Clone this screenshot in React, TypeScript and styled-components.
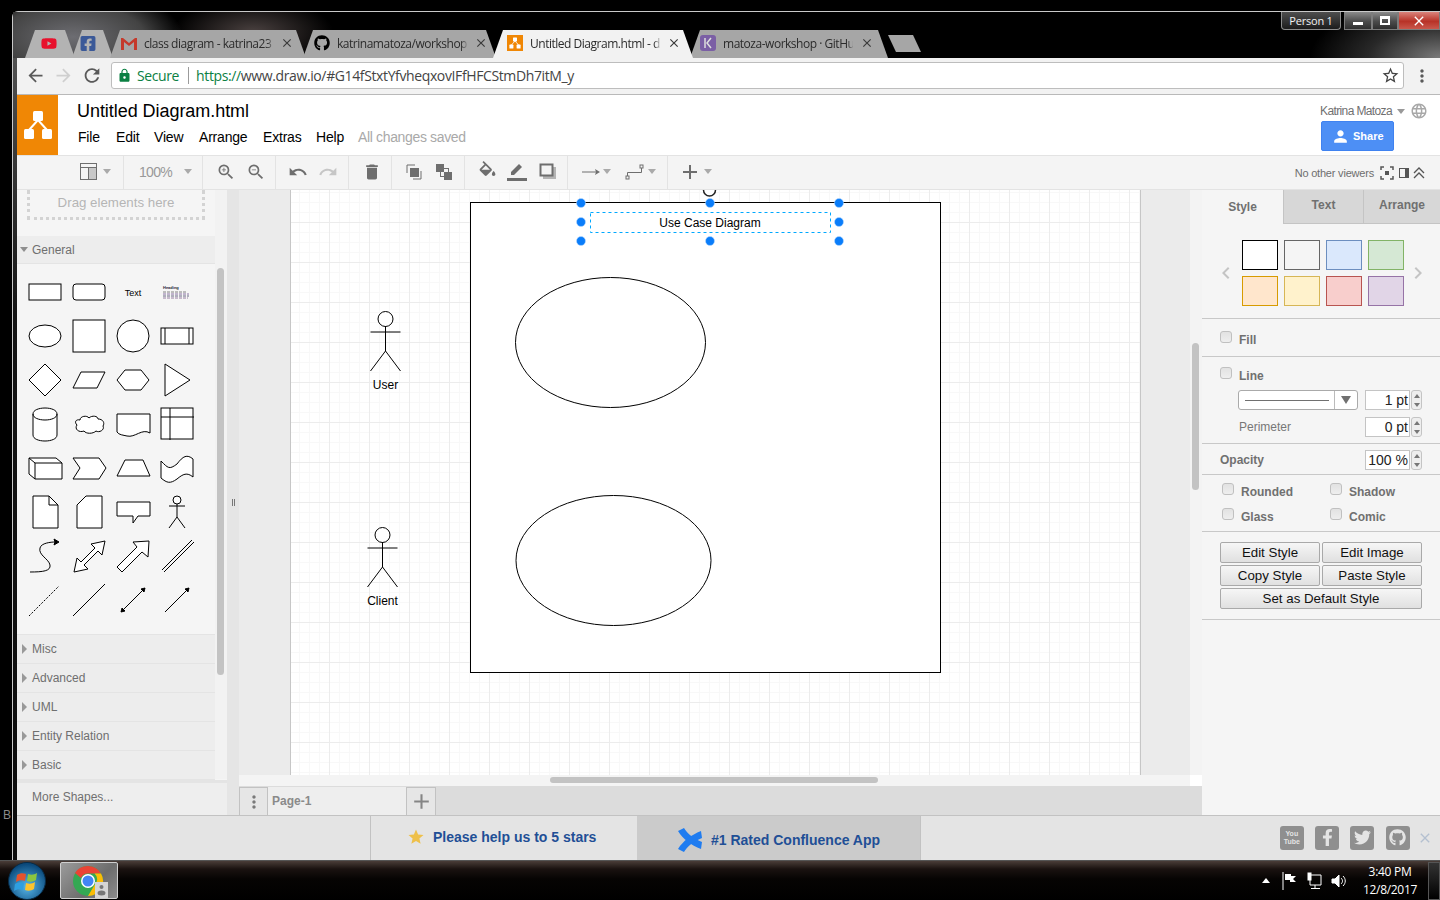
import React from 'react';
import styled, { createGlobalStyle } from 'styled-components';
import {
    MdArrowBack,
    MdArrowForward,
    MdRefresh,
    MdLock,
    MdStarBorder,
    MdMoreVert,
    MdZoomIn,
    MdZoomOut,
    MdUndo,
    MdRedo,
    MdDelete,
    MdAdd,
    MdPerson,
    MdLanguage,
    MdStar,
    MdChevronLeft,
    MdChevronRight,
    MdClose,
} from 'react-icons/md';
import { FaYoutube, FaFacebookF, FaFacebookSquare, FaGithub, FaTwitter } from 'react-icons/fa';

const uiFont = '"Liberation Sans", Arial, sans-serif';
const chromeFont = '"Open Sans", "Noto Sans", sans-serif';

const GlobalStyle = createGlobalStyle`
    html, body {
        margin: 0;
        padding: 0;
        background: #000;
        font-family: ${uiFont};
        overflow: hidden;
    }
    * {
        box-sizing: border-box;
    }
`;

const Desktop = styled.div`
    position: relative;
    width: 1440px;
    height: 900px;
    padding-top: 11px;
    display: flex;
    flex-direction: column;
    background: #000;
    overflow: hidden;
`;

const DesktopLetter = styled.span<{ $top: number }>`
    position: absolute;
    left: 3px;
    top: ${p => p.$top}px;
    font-size: 12px;
    color: #8a8a8a;
`;

const BrowserWindow = styled.div`
    margin-left: 12px;
    height: 849px;
    display: flex;
    flex-direction: column;
    border-top: 1px solid #c9c9c9;
    border-left: 1px solid #c9c9c9;
    border-top-left-radius: 6px;
    padding-left: 4px;
    background: linear-gradient(180deg, #5c5c5c 0, #303030 180px, #141414 300px, #0b0b0b 100%);
`;

const Gap = styled.span<{ $left: number }>`
    margin-left: ${p => p.$left}px;
    display: flex;
    align-items: center;
    flex: none;
`;

/* chrome tabs */
const TabStrip = styled.div`
    height: 46px;
    margin-left: -4px;
    display: flex;
    background:
        radial-gradient(ellipse 110px 50px at 60px 25px, #6d6d72 0, rgba(90, 90, 90, 0.75) 65%, transparent 100%),
        radial-gradient(ellipse 80px 34px at 240px 20px, #4a4140 0, transparent 100%),
        radial-gradient(ellipse 130px 60px at 1427px 46px, #7a7a7a 0, rgba(80, 80, 80, 0.5) 55%, transparent 100%),
        #000;
`;

const Tabs = styled.div`
    align-self: flex-end;
    display: flex;
    height: 28px;
    margin-left: 12px;
`;

const Tab = styled.div<{ $width: number; $pad?: number; $padRight?: number; $active?: boolean; $faint?: boolean }>`
    width: ${p => p.$width}px;
    margin-right: -3px;
    padding: 0 ${p => p.$padRight || 8}px 2px ${p => p.$pad || 11}px;
    display: flex;
    align-items: center;
    gap: 7px;
    clip-path: polygon(0 100%, 10px 0, calc(100% - 10px) 0, 100% 100%);
    background: ${p => (p.$active ? '#f2f2f2' : p.$faint ? '#b3b3b3' : '#a6a6a6')};
    position: relative;
    z-index: ${p => (p.$active ? 2 : 1)};
`;

const TabIcon = styled.span<{ $color?: string }>`
    width: 16px;
    height: 16px;
    flex: none;
    display: flex;
    align-items: center;
    justify-content: center;
    color: ${p => p.$color || '#000'};
`;

const TabLogo = styled.span`
    width: 16px;
    height: 16px;
    display: flex;
    align-items: center;
    justify-content: center;
    background: #f08705;
`;

const TabTitle = styled.span`
    flex: 1;
    min-width: 0;
    white-space: nowrap;
    font-family: ${chromeFont};
    font-size: 12px;
    letter-spacing: -0.48px;
    color: #2b2b2b;
    -webkit-mask-image: linear-gradient(90deg, #000 calc(100% - 6px), rgba(0, 0, 0, 0.2) 100%);
    mask-image: linear-gradient(90deg, #000 calc(100% - 6px), rgba(0, 0, 0, 0.2) 100%);
`;

const TabClose = styled(MdClose)`
    flex: none;
    width: 14px;
    height: 14px;
    color: #3a3a3a;
`;

const NewTab = styled.div`
    align-self: flex-end;
    width: 33px;
    height: 17px;
    margin: 0 0 6px 3px;
    clip-path: polygon(0 0, 25px 0, 100% 100%, 8px 100%);
    background: #a6a6a6;
`;

const WindowControls = styled.div`
    margin-left: auto;
    display: flex;
    align-self: flex-start;
    height: 18px;
`;

const PersonButton = styled.div`
    width: 60px;
    margin-right: 3px;
    border: 1px solid #8d8d8d;
    border-top: none;
    border-radius: 0 0 4px 4px;
    background: linear-gradient(180deg, #4e4e4e, #1c1c1c);
    color: #f2f2f2;
    font-family: ${chromeFont};
    font-size: 11px;
    letter-spacing: -0.2px;
    text-align: center;
    line-height: 17px;
`;

const ControlButton = styled.div<{ $width: number; $close?: boolean }>`
    width: ${p => p.$width}px;
    border: 1px solid #7d7d7d;
    border-top: none;
    display: flex;
    align-items: center;
    justify-content: center;
    color: #fff;
    background: ${p =>
        p.$close
            ? 'linear-gradient(180deg, #d9837b 0, #b83227 55%, #c9584c 100%)'
            : 'linear-gradient(180deg, #8a8a8a 0, #4c4c4c 55%, #2f2f2f 100%)'};
`;

const MinGlyph = styled.span`
    width: 10px;
    height: 3px;
    margin-top: 6px;
    background: #fff;
`;

const MaxGlyph = styled.span`
    width: 10px;
    height: 9px;
    border: 2px solid #fff;
    border-top-width: 3px;
`;

/* omnibar */
const Omnibar = styled.div`
    height: 37px;
    display: flex;
    align-items: center;
    background: #f2f2f2;
    border-bottom: 1px solid #b9b9b9;
    padding-left: 8px;
    padding-bottom: 1px;
`;

const NavIcon = styled.span<{ $width: number; $faint?: boolean }>`
    width: ${p => p.$width}px;
    display: flex;
    justify-content: center;
    color: ${p => (p.$faint ? '#cfcfcf' : '#5a5a5a')};
    font-size: 21px;
`;

const UrlBox = styled.div`
    width: 1295px;
    height: 27px;
    margin-left: 8px;
    display: flex;
    align-items: center;
    background: #fff;
    border: 1px solid #bdbdbd;
    border-radius: 3px;
    padding-left: 5px;
    font-family: ${chromeFont};
    font-size: 14px;
    letter-spacing: -0.38px;
`;

const SecureLabel = styled.span`
    color: #0b8043;
    margin-left: 5px;
`;

const UrlDivider = styled.span`
    width: 1px;
    height: 17px;
    background: #9b9b9b;
    margin: 0 7px 0 9px;
`;

const UrlScheme = styled.span`
    color: #0b8043;
`;

const UrlRest = styled.span`
    color: #444;
`;

const BookmarkStar = styled(MdStarBorder)`
    margin-left: auto;
    margin-right: 3px;
    color: #444;
    font-size: 19px;
`;

/* draw.io header */
const AppHeader = styled.header`
    height: 60px;
    display: flex;
    background: #fff;
`;

const LogoTile = styled.div`
    width: 41px;
    background: #f08705;
    display: flex;
    align-items: center;
    justify-content: center;
`;

const TitleColumn = styled.div`
    margin-left: 19px;
    display: flex;
    flex-direction: column;
`;

const DiagramName = styled.div`
    margin-top: 6px;
    font-size: 18px;
    line-height: 21px;
    letter-spacing: -0.05px;
    color: #000;
`;

const MenuBar = styled.nav`
    display: flex;
    align-items: center;
    margin-top: 7px;
    margin-left: 1px;
    font-size: 14px;
    letter-spacing: -0.2px;
    color: #000;
`;

const MenuItem = styled.span<{ $width: number }>`
    width: ${p => p.$width}px;
`;

const SaveStatus = styled.span`
    color: #a9a9a9;
    letter-spacing: -0.35px;
`;

const AccountColumn = styled.div`
    margin-left: auto;
    width: 119px;
    padding-top: 7px;
    display: flex;
    flex-direction: column;
`;

const AccountRow = styled.div`
    margin-left: -1px;
    display: flex;
    align-items: center;
    font-size: 12px;
    letter-spacing: -0.62px;
    color: #707070;
    height: 18px;
`;

const Caret = styled.span<{ $dir?: 'down' | 'right' | 'up'; $color?: string; $left?: number }>`
    display: inline-block;
    width: 0;
    height: 0;
    flex: none;
    margin-left: ${p => p.$left || 0}px;
    ${p =>
        p.$dir === 'right'
            ? `border-top: 5px solid transparent; border-bottom: 5px solid transparent; border-left: 5px solid ${p.$color || '#999'};`
            : p.$dir === 'up'
              ? `border-left: 4px solid transparent; border-right: 4px solid transparent; border-bottom: 5px solid ${p.$color || '#aaa'};`
              : `border-left: 4px solid transparent; border-right: 4px solid transparent; border-top: 5px solid ${p.$color || '#aaa'};`}
`;

const ShareButton = styled.button`
    width: 73px;
    height: 30px;
    margin-top: 1px;
    display: flex;
    align-items: center;
    gap: 3px;
    padding: 0 0 0 9px;
    border: 1px solid #3f82f0;
    border-radius: 2px;
    background: #4d8ff5;
    color: #fff;
    font-family: ${uiFont};
    font-size: 11px;
    font-weight: bold;
`;

/* toolbar */
const Toolbar = styled.div`
    height: 35px;
    display: flex;
    background: #f4f4f4;
    border-top: 1px solid #e3e3e3;
    border-bottom: 1px solid #e3e3e3;
`;

const ToolGroup = styled.div<{ $width: number; $pad?: number; $last?: boolean }>`
    width: ${p => p.$width}px;
    padding: 0 0 2px ${p => p.$pad || 0}px;
    display: flex;
    align-items: center;
    border-right: ${p => (p.$last ? 'none' : '1px solid #e3e3e3')};
    color: #6e6e6e;
    font-size: 20px;
`;

const ToolSlot = styled.span<{ $width: number }>`
    width: ${p => p.$width}px;
    display: flex;
    justify-content: center;
    align-items: center;
`;

const ZoomValue = styled.span`
    width: 41px;
    font-size: 14px;
    letter-spacing: -0.7px;
    color: #999;
    text-align: center;
`;

const ViewerInfo = styled.div`
    margin-left: auto;
    padding-right: 15px;
    display: flex;
    align-items: center;
    color: #6e6e6e;
    font-size: 11px;
    letter-spacing: -0.2px;
`;

/* main area */
const Main = styled.div`
    height: 625px;
    display: flex;
    background: #f5f5f5;
`;

const Sidebar = styled.aside`
    position: relative;
    width: 210px;
    flex: none;
    display: flex;
    flex-direction: column;
    background: #f5f5f5;
    overflow: hidden;
`;

const SidebarBody = styled.div`
    flex: 1;
    width: 198px;
`;

const DragArea = styled.div`
    margin-left: 10px;
    width: 178px;
    height: 30px;
    border: 3px dotted #d3d3d3;
    border-top: none;
    font-size: 13.3px;
    color: #b5b5b5;
    text-align: center;
    padding-top: 4px;
    line-height: 18px;
    white-space: nowrap;
`;

const SectionRow = styled.div`
    height: 29px;
    display: flex;
    align-items: center;
    gap: 5px;
    padding-left: 5px;
    background: #ededed;
    border-bottom: 1px solid #e4e4e4;
    font-size: 12px;
    color: #6f6f6f;
`;

const GeneralRow = styled(SectionRow)`
    margin-top: 16px;
    height: 28px;
    gap: 4px;
    padding-left: 3px;
`;

const ShapeGrid = styled.div`
    padding: 6px 0 12px 6px;
    display: grid;
    grid-template-columns: repeat(4, 44px);
    grid-auto-rows: 44px;
    border-bottom: 1px solid #e4e4e4;
`;

const ShapeSvg = styled.svg`
    display: block;
    width: 44px;
    height: 44px;
    fill: #fff;
    stroke: #000;
    stroke-width: 1;
`;

const ScrollTrack = styled.div`
    position: absolute;
    left: 198px;
    top: 0;
    bottom: 36px;
    width: 12px;
    background: #f2f2f2;
`;

const ScrollThumb = styled.div<{ $top: number; $height: number }>`
    position: absolute;
    left: 2px;
    top: ${p => p.$top}px;
    width: 7px;
    height: ${p => p.$height}px;
    border-radius: 4px;
    background: #c3c3c3;
`;

const MoreShapes = styled.div`
    height: 36px;
    flex: none;
    border-top: 3px solid #e4e4e4;
    background: #eeeeee;
    padding-left: 15px;
    font-size: 12px;
    line-height: 28px;
    color: #707070;
`;

const Splitter = styled.div`
    width: 12px;
    flex: none;
    background: #e5e5e5;
    display: flex;
    align-items: center;
    justify-content: center;
    gap: 1px;
`;

const SplitGrip = styled.span`
    width: 1px;
    height: 7px;
    background: #777;
`;

const CanvasColumn = styled.div`
    flex: 1;
    min-width: 0;
    display: flex;
    flex-direction: column;
    background: #fff;
`;

const Viewport = styled.div`
    height: 585px;
    display: flex;
    background: #ebebeb;
`;

const CanvasGutter = styled.div<{ $width: number }>`
    width: ${p => p.$width}px;
    flex: none;
`;

const PageSheet = styled.div`
    width: 851px;
    flex: none;
    position: relative;
    overflow: hidden;
    border-left: 1px solid #c6c6c6;
    border-right: 1px solid #c6c6c6;
    background-color: #fff;
    background-image:
        linear-gradient(#ececec 1px, transparent 1px),
        linear-gradient(90deg, #ececec 1px, transparent 1px),
        linear-gradient(#f8f8f8 1px, transparent 1px),
        linear-gradient(90deg, #f8f8f8 1px, transparent 1px);
    background-size: 40px 40px, 40px 40px, 10px 10px, 10px 10px;
    background-position: 0 32px, 38px 0, 0 2px, 8px 0;
`;

const DiagramSvg = styled.svg`
    position: absolute;
    left: 0;
    top: 0;
`;

const VScrollTrack = styled.div`
    position: relative;
    width: 12px;
    flex: none;
    margin-left: auto;
    background: #f3f3f3;
`;

const HScrollTrack = styled.div`
    position: relative;
    height: 11px;
    background: #f4f4f4;
    margin-right: 12px;
`;

const HThumb = styled.div`
    position: absolute;
    left: 311px;
    top: 2px;
    width: 328px;
    height: 6px;
    border-radius: 3px;
    background: #c3c3c3;
`;

const PageTabs = styled.div`
    height: 29px;
    display: flex;
    background: #dcdcdc;
    border-top: 1px solid #dcdcdc;
`;

const PageMenu = styled.div`
    width: 29px;
    display: flex;
    align-items: center;
    justify-content: center;
    background: #e6e6e6;
    border: 1px solid #c2c2c2;
    border-bottom: none;
    color: #7a7a7a;
    font-size: 20px;
`;

const PageTab = styled.div`
    width: 138px;
    background: #eeeeee;
    padding-left: 4px;
    font-size: 12px;
    line-height: 28px;
    font-weight: bold;
    color: #8a8a8a;
`;

const PageAdd = styled(PageMenu)`
    width: 30px;
    font-size: 25px;
    color: #858585;
`;

/* format panel */
const FormatPanel = styled.aside`
    width: 238px;
    flex: none;
    background: #f5f5f5;
`;

const PanelTabs = styled.div`
    height: 34px;
    display: flex;
`;

const PanelTab = styled.div<{ $width: number; $active?: boolean }>`
    width: ${p => p.$width}px;
    text-align: center;
    font-size: 12px;
    font-weight: bold;
    color: #707070;
    line-height: ${p => (p.$active ? 34 : 30)}px;
    background: ${p => (p.$active ? '#f5f5f5' : '#d7d7d7')};
    border-left: ${p => (p.$active ? 'none' : '1px solid #c4c4c4')};
    border-bottom: ${p => (p.$active ? 'none' : '1px solid #c4c4c4')};
`;

const PanelSection = styled.section<{ $height: number }>`
    height: ${p => p.$height}px;
    border-bottom: 1px solid #c8c8c8;
`;

const SwatchLayout = styled.div`
    display: flex;
    align-items: center;
    padding: 16px 0 0 12px;
    color: #c4c4c4;
    font-size: 24px;
    gap: 4px;
`;

const SwatchGrid = styled.div`
    display: grid;
    grid-template-columns: repeat(4, 36px);
    grid-auto-rows: 30px;
    gap: 6px;
`;

const NextSwatches = styled(MdChevronRight)`
    margin-left: -2px;
`;

const Swatch = styled.div<{ $fill: string; $line: string }>`
    background: ${p => p.$fill};
    border: 1px solid ${p => p.$line};
`;

const CheckRow = styled.label`
    display: flex;
    align-items: center;
    gap: 7px;
    font-size: 12px;
    font-weight: bold;
    color: #707070;
`;

const FillRow = styled(CheckRow)`
    padding: 14px 0 0 18px;
`;

const LineHead = styled(CheckRow)`
    padding: 8px 0 0 18px;
    height: 30px;
`;

const CheckBox = styled.span`
    width: 12px;
    height: 12px;
    flex: none;
    border: 1px solid #c0c0c0;
    border-radius: 3px;
    background: linear-gradient(180deg, #e2e2e2, #eeeeee);
    position: relative;
    top: -3px;
`;

const FieldRow = styled.div<{ $top: number }>`
    height: 20px;
    margin-top: ${p => p.$top}px;
    padding: 0 18px 0 36px;
    display: flex;
    align-items: center;
`;

const LineSelect = styled.div`
    width: 120px;
    height: 20px;
    display: flex;
    align-items: center;
    background: #fff;
    border: 1px solid #aaa;
    border-radius: 3px;
    padding-left: 6px;
`;

const SelectLine = styled.span`
    width: 85px;
    height: 1px;
    background: #707070;
`;

const SelectArrow = styled.span`
    margin-left: 5px;
    width: 23px;
    height: 18px;
    border-left: 1px solid #bbb;
    display: flex;
    align-items: center;
    justify-content: center;
`;

const SelectCaret = styled(Caret)`
    border-left-width: 5px;
    border-right-width: 5px;
    border-top-width: 8px;
`;

const SpinInput = styled.div`
    width: 45px;
    height: 20px;
    flex: none;
    margin-left: auto;
    border: 1px solid #c4c4c4;
    background: #fff;
    color: #222;
    font-size: 14px;
    font-weight: normal;
    line-height: 19px;
    text-align: right;
    padding-right: 1px;
`;

const Stepper = styled.div`
    width: 11px;
    height: 20px;
    flex: none;
    margin-left: 1px;
    border: 1px solid #c4c4c4;
    border-radius: 3px;
    display: flex;
    flex-direction: column;
    align-items: center;
    justify-content: space-around;
    background: #eee;
`;

const StepUp = styled.span`
    width: 0;
    height: 0;
    border-left: 3px solid transparent;
    border-right: 3px solid transparent;
    border-bottom: 4px solid #777;
`;

const StepDown = styled.span`
    width: 0;
    height: 0;
    border-left: 3px solid transparent;
    border-right: 3px solid transparent;
    border-top: 4px solid #777;
`;

const FieldName = styled.span`
    margin-left: 1px;
    font-size: 12px;
    color: #777;
`;

const OpacityRow = styled.div`
    height: 26px;
    padding: 6px 18px 0;
    display: flex;
    align-items: center;
    font-size: 12px;
    font-weight: bold;
    color: #707070;
`;

const OptionGrid = styled.div`
    padding: 4px 0 0 20px;
    display: grid;
    grid-template-columns: repeat(2, 108px);
    grid-auto-rows: 25px;
`;

const ActionGrid = styled.div`
    padding: 10px 0 0 18px;
    display: grid;
    grid-template-columns: repeat(2, 100px);
    grid-auto-rows: 21px;
    gap: 2px;
`;

const ActionButton = styled.button<{ $wide?: boolean }>`
    ${p => (p.$wide ? 'grid-column: span 2;' : '')}
    padding: 0;
    border: 1px solid #a9a9a9;
    border-radius: 2px;
    background: linear-gradient(180deg, #f6f6f6, #e0e0e0);
    font-family: ${uiFont};
    font-size: 13.3px;
    color: #111;
`;

/* footer */
const Footer = styled.footer`
    height: 45px;
    display: flex;
    background: #e4e4e4;
    border-top: 1px solid #c2c2c2;
`;

const FooterLink = styled.div<{ $width: number; $left: number; $highlight?: boolean; $offset: number }>`
    width: ${p => p.$width}px;
    margin-left: ${p => p.$left}px;
    padding: ${p => p.$offset}px 0 2px ${p => (p.$highlight ? 40 : 36)}px;
    display: flex;
    align-items: center;
    align-self: stretch;
    gap: 8px;
    background: ${p => (p.$highlight ? '#cbcbcb' : 'transparent')};
    border-left: ${p => (p.$highlight ? 'none' : '1px solid #c2c2c2')};
    border-right: ${p => (p.$highlight ? '1px solid #c2c2c2' : 'none')};
    font-size: 14px;
    font-weight: bold;
    color: #1f4f96;
`;

const SocialRow = styled.div`
    margin-left: auto;
    padding: 0 7px 1px 0;
    display: flex;
    align-items: center;
    gap: 11.3px;
`;

const SocialTile = styled.div`
    width: 24px;
    height: 24px;
    border-radius: 3px;
    background: #8f8f8f;
    color: #e4e4e4;
    display: flex;
    align-items: center;
    justify-content: center;
    font-size: 17px;
`;

const YouTubeText = styled.div`
    font-size: 7px;
    line-height: 8px;
    text-align: center;
    font-weight: bold;
`;

const FooterClose = styled(MdClose)`
    margin-left: -4px;
    color: #b4c0d0;
    font-size: 16px;
`;

/* windows taskbar */
const Taskbar = styled.div`
    height: 40px;
    display: flex;
    align-items: center;
    background: linear-gradient(180deg, #4a3d38 0, #1a1210 8px, #060403 18px, #000 100%);
    border-top: 1px solid #555;
`;

const StartOrb = styled.svg`
    width: 40px;
    height: 40px;
    margin-left: 7px;
`;

const TaskButton = styled.div`
    width: 58px;
    height: 37px;
    margin-left: 13px;
    padding-left: 4px;
    display: flex;
    align-items: center;
    justify-content: center;
    border: 1px solid #cfcfcf;
    border-radius: 2px;
    background: linear-gradient(135deg, #9b9b9b, #6d6d6d 60%, #8c8c8c);
`;

const Tray = styled.div`
    margin-left: auto;
    display: flex;
    align-items: center;
    color: #fff;
`;

const Clock = styled.div`
    width: 76px;
    margin: 1px 0 0 5px;
    text-align: center;
    font-family: ${chromeFont};
    font-size: 12px;
    letter-spacing: -0.3px;
    line-height: 18px;
    color: #fff;
`;

const ShowDesktop = styled.div`
    width: 12px;
    height: 38px;
    border: 1px solid #555;
    background: linear-gradient(180deg, #333, #000);
`;

const GmailGlyph = () => (
    <svg width="16" height="13" viewBox="0 0 16 13">
        <path d="M0 13V1h2l6 5 6-5h2v12h-3V5L8 9 3 5v8z" fill="#c5392b" />
    </svg>
);

const DrawioGlyph = ({ size }: { size: number }) => (
    <svg width={size} height={size} viewBox="0 0 30 30" fill="#fff">
        <rect x="10" y="1" width="10" height="10" rx="1.5" />
        <rect x="1" y="19" width="10" height="10" rx="1.5" />
        <rect x="19" y="19" width="10" height="10" rx="1.5" />
        <path d="M15 10L6 20M15 10l9 10" stroke="#fff" strokeWidth="2" fill="none" />
    </svg>
);

const ChromeLogo = () => (
    <svg width="36" height="36" viewBox="0 0 36 36">
        <circle cx="15" cy="18" r="15" fill="#34a853" />
        <path d="M15 3a15 15 0 0 1 13 7.500H15a7.500 7.500 0 0 0-7 4.500L2 10A15 15 0 0 1 15 3z" fill="#ea4335" />
        <path d="M28 10.500a15 15 0 0 1-13 22.500l6.500-11a7.500 7.500 0 0 0 0-11.500z" fill="#fbbc05" />
        <circle cx="15" cy="18" r="7" fill="#fff" />
        <circle cx="15" cy="18" r="5.500" fill="#4285f4" />
        <rect x="22" y="19" width="13" height="16" fill="#d5d5d5" />
        <circle cx="28.500" cy="24" r="2" fill="#777" />
        <ellipse cx="28.500" cy="30" rx="4" ry="2.500" fill="#777" />
    </svg>
);

const ConfluenceGlyph = () => (
    <svg width="26" height="26" viewBox="0 0 26 26" fill="#1f7cf0">
        <path d="M1 4l6-3c3 5 7 9 18 14l-1 7C14 18 6 12 1 4z" />
        <path d="M1 22l6 3c3-5 7-9 18-14l-1-7C14 8 6 14 1 22z" />
    </svg>
);

const ToFrontIcon = () => (
    <svg width="18" height="18" viewBox="0 0 18 18">
        <path d="M2 10V2h8M16 8v8H8" fill="none" stroke="#6e6e6e" />
        <rect x="5" y="5" width="9" height="9" fill="#6e6e6e" />
    </svg>
);

const ToBackIcon = () => (
    <svg width="18" height="18" viewBox="0 0 18 18">
        <rect x="5.500" y="5.500" width="8" height="8" fill="none" stroke="#6e6e6e" />
        <rect x="1" y="1" width="8" height="8" fill="#6e6e6e" />
        <rect x="9" y="9" width="8" height="8" fill="#6e6e6e" />
    </svg>
);

const BucketIcon = () => (
    <svg width="21" height="21" viewBox="0 0 24 24" fill="#6e6e6e">
        <path d="M16.560 8.940L7.620 0 6.210 1.410l2.380 2.380-5.150 5.150c-.59.59-.59 1.540 0 2.120l5.500 5.500c.29.29.68.44 1.060.44s.77-.15 1.060-.44l5.500-5.500c.59-.58.59-1.530 0-2.120zM5.210 10L10 5.210 14.790 10H5.210zM19 11.500s-2 2.170-2 3.500c0 1.100.9 2 2 2s2-.9 2-2c0-1.330-2-3.500-2-3.500z" />
    </svg>
);

const shapeRows: React.ReactNode[] = [
    <rect key="r1" x="6" y="14" width="32" height="16" />,
    <rect key="r2" x="6" y="14" width="32" height="16" rx="3" />,
    <text key="r3" x="22" y="26" fontSize="9" fontFamily={uiFont} textAnchor="middle" stroke="none" fill="#000">
        Text
    </text>,
    <g key="r4" fill="none" strokeWidth="0.800">
        <text x="8" y="19" fontSize="4" fontFamily={uiFont} fontWeight="bold" stroke="none" fill="#223">
            Heading
        </text>
        <path d="M8 22h24" stroke="#666" strokeDasharray="3 1" />
        <path d="M8 24h26" stroke="#705090" strokeDasharray="3 1" />
        <path d="M8 26h26" stroke="#446" strokeDasharray="3 1" />
        <path d="M8 28h25" stroke="#806090" strokeDasharray="3 1" />
    </g>,
    <ellipse key="e" cx="22" cy="22" rx="16" ry="11" />,
    <rect key="s" x="6" y="6" width="32" height="32" />,
    <circle key="c" cx="22" cy="22" r="16" />,
    <g key="p">
        <rect x="6" y="14" width="32" height="16" />
        <path d="M10 14v16M34 14v16" />
    </g>,
    <polygon key="d" points="22,6 38,22 22,38 6,22" />,
    <polygon key="pl" points="6,30 14,14 38,14 30,30" />,
    <polygon key="h" points="6,22 14,12 30,12 38,22 30,32 14,32" />,
    <polygon key="t" points="10,6 35,22 10,38" />,
    <g key="cy">
        <path d="M10 12c0-8 24-8 24 0v21c0 8-24 8-24 0z" />
        <path d="M10 12c0 8 24 8 24 0" fill="none" />
    </g>,
    <path
        key="cl"
        d="M13 18c0-4 7-5 9-2 3-3 9-2 9 1 5 0 7 4 5 7 2 4-4 7-7 5-3 3-10 3-12 0-5 2-10-2-7-6-3-3-1-6 3-5z"
    />,
    <path key="do" d="M6 12h33v19c-8-5-15 5-23 3-4-1-8-1-10-4z" />,
    <g key="is">
        <rect x="6" y="6" width="32" height="31" />
        <path d="M15 6v32M6 15h33" fill="none" />
    </g>,
    <g key="cu">
        <path d="M6 12h27l6 5v16H12l-6-5z" />
        <path d="M6 12l6 5h27M12 17v16" fill="none" />
    </g>,
    <polygon key="st" points="6,12 32,12 39,22 32,33 6,33 13,22" />,
    <polygon key="tr" points="14,14 32,14 39,30 6,30" />,
    <path key="ta" d="M6 15c7 7 8 9 16 3 6-8 10-10 16-5v18c-6-5-10-3-16 2-7 5-10 4-16-1z" />,
    <g key="no">
        <path d="M10 6h16l9 9v23H10z" />
        <path d="M26 6v9h9" fill="none" />
    </g>,
    <path key="ca" d="M10 15l9-9h16v32H10z" />,
    <path key="ba" d="M6 12h33v14H27l-5 7v-7H6z" />,
    <g key="ac" fill="none">
        <circle cx="22" cy="10" r="4" fill="#fff" />
        <path d="M22 14v13M14 16h16M22 27l-8 11M22 27l8 11" />
    </g>,
    <g key="sc">
        <path d="M7 38c13 0 21-1 20-7-1-6-12-10-10-17 1-5 11-6 15-6" fill="none" />
        <polygon points="36,8 31,5 32,8 31,11" fill="#000" />
    </g>,
    <polygon key="bd" points="7,38 10,24 14,28 28,14 24,10 38,7 35,21 31,17 17,31 21,35" />,
    <polygon key="ar" points="6,33 26,13 22,8 38,7 37,23 31,18 11,38" />,
    <path key="dl" d="M7 36L37 6M9 38L39 8" fill="none" />,
    <path key="da" d="M6 38L36 8" fill="none" strokeDasharray="2 1.500" />,
    <path key="li" d="M6 38L38 6" fill="none" />,
    <g key="bi">
        <path d="M10 34L34 10" fill="none" />
        <polygon points="34,10 30,11 33,14" fill="#000" />
        <polygon points="10,34 14,33 11,30" fill="#000" />
    </g>,
    <g key="ra">
        <path d="M10 34L34 10" fill="none" />
        <polygon points="34,10 30,11 33,14" fill="#000" />
    </g>,
];

const sectionNames = ['Misc', 'Advanced', 'UML', 'Entity Relation', 'Basic'];

const swatches = [
    ['#ffffff', '#000000'],
    ['#f5f5f5', '#666666'],
    ['#dae8fc', '#6c8ebf'],
    ['#d5e8d4', '#82b366'],
    ['#ffe6cc', '#d79b00'],
    ['#fff2cc', '#d6b656'],
    ['#f8cecc', '#b85450'],
    ['#e1d5e7', '#9673a6'],
];

const handleXs = [581, 710, 839];
const handleYs = [203, 222, 241];

const Actor = ({ x, y }: { x: number; y: number }) => (
    <g fill="#fff" stroke="#000">
        <circle cx={x} cy={y + 8} r="7.500" />
        <path d={`M${x} ${y + 15}v25M${x - 15} ${y + 21}h30M${x} ${y + 40}l-15 20M${x} ${y + 40}l15 20`} fill="none" />
    </g>
);

const Diagram = () => (
    <DiagramSvg width="849" height="585" viewBox="291 190 849 585">
        <rect x="470.500" y="202.500" width="470" height="470" fill="#fff" stroke="#000" />
        <ellipse cx="610.500" cy="342.500" rx="95" ry="65" fill="#fff" stroke="#000" />
        <ellipse cx="613.500" cy="560.500" rx="97.500" ry="65" fill="#fff" stroke="#000" />
        <Actor x={385.5} y={311} />
        <Actor x={382.5} y={527} />
        <text x="385.500" y="389" fontSize="12" fontFamily={uiFont} textAnchor="middle">
            User
        </text>
        <text x="382.500" y="605" fontSize="12" fontFamily={uiFont} textAnchor="middle">
            Client
        </text>
        <circle cx="709.500" cy="190" r="6" fill="#fff" stroke="#222" strokeWidth="1.500" />
        <rect x="590.500" y="212.500" width="240" height="20" fill="#fff" stroke="#00a8ff" strokeDasharray="3 3" />
        <text x="710" y="227" fontSize="12" fontFamily={uiFont} textAnchor="middle">
            Use Case Diagram
        </text>
        {handleYs.map(y =>
            handleXs
                .filter(x => !(x === 710 && y === 222))
                .map(x => <circle key={`${x}-${y}`} cx={x} cy={y} r="4.500" fill="#0a7dfa" stroke="#bcdcff" strokeWidth="0.500" />)
        )}
    </DiagramSvg>
);

const App = () => {
    return (
        <>
            <GlobalStyle />
            <Desktop>
                <DesktopLetter $top={808}>B</DesktopLetter>
                <BrowserWindow>
                    <TabStrip>
                        <Tabs>
                            <Tab $width={50} $pad={16} $faint>
                                <TabIcon $color="#e8112d">
                                    <FaYoutube size={17} />
                                </TabIcon>
                            </Tab>
                            <Tab $width={41} $pad={8} $faint>
                                <TabIcon $color="#3b5998">
                                    <FaFacebookSquare size={17} />
                                </TabIcon>
                            </Tab>
                            <Tab $width={196} $padRight={12}>
                                <TabIcon>
                                    <GmailGlyph />
                                </TabIcon>
                                <TabTitle>class diagram - katrina23</TabTitle>
                                <TabClose />
                            </Tab>
                            <Tab $width={193}>
                                <TabIcon>
                                    <FaGithub size={16} />
                                </TabIcon>
                                <TabTitle>katrinamatoza/workshop</TabTitle>
                                <TabClose />
                            </Tab>
                            <Tab $width={200} $pad={14} $padRight={12} $active>
                                <TabIcon>
                                    <TabLogo>
                                        <DrawioGlyph size={12} />
                                    </TabLogo>
                                </TabIcon>
                                <TabTitle>Untitled Diagram.html - d</TabTitle>
                                <TabClose />
                            </Tab>
                            <Tab $width={198} $pad={10} $padRight={14}>
                                <TabIcon>
                                    <svg width="16" height="16" viewBox="0 0 16 16">
                                        <rect width="16" height="16" rx="3" fill="#7b5fa5" />
                                        <path d="M5 3v10M11 3L7 8l4 5" stroke="#ddd" strokeWidth="1.500" fill="none" />
                                    </svg>
                                </TabIcon>
                                <TabTitle>matoza-workshop · GitHu</TabTitle>
                                <TabClose />
                            </Tab>
                        </Tabs>
                        <NewTab />
                        <WindowControls>
                            <PersonButton>Person 1</PersonButton>
                            <ControlButton $width={28}>
                                <MinGlyph />
                            </ControlButton>
                            <ControlButton $width={26}>
                                <MaxGlyph />
                            </ControlButton>
                            <ControlButton $width={42} $close>
                                <MdClose size={16} />
                            </ControlButton>
                        </WindowControls>
                    </TabStrip>
                    <Omnibar>
                        <NavIcon $width={22}>
                            <MdArrowBack />
                        </NavIcon>
                        <NavIcon $width={34} $faint>
                            <MdArrowForward />
                        </NavIcon>
                        <NavIcon $width={22}>
                            <MdRefresh size={23} />
                        </NavIcon>
                        <UrlBox>
                            <MdLock color="#0b8043" size={15} />
                            <SecureLabel>Secure</SecureLabel>
                            <UrlDivider />
                            <UrlScheme>https://</UrlScheme>
                            <UrlRest>www.draw.io/#G14fStxtYfvheqxovIFfHFCStmDh7itM_y</UrlRest>
                            <BookmarkStar />
                        </UrlBox>
                        <NavIcon $width={36}>
                            <MdMoreVert size={20} />
                        </NavIcon>
                    </Omnibar>
                    <AppHeader>
                        <LogoTile>
                            <DrawioGlyph size={30} />
                        </LogoTile>
                        <TitleColumn>
                            <DiagramName>Untitled Diagram.html</DiagramName>
                            <MenuBar>
                                <MenuItem $width={38}>File</MenuItem>
                                <MenuItem $width={38}>Edit</MenuItem>
                                <MenuItem $width={45}>View</MenuItem>
                                <MenuItem $width={64}>Arrange</MenuItem>
                                <MenuItem $width={53}>Extras</MenuItem>
                                <MenuItem $width={42}>Help</MenuItem>
                                <SaveStatus>All changes saved</SaveStatus>
                            </MenuBar>
                        </TitleColumn>
                        <AccountColumn>
                            <AccountRow>
                                Katrina Matoza
                                <Caret $color="#999" $left={5} />
                                <Gap $left={5}>
                                    <MdLanguage size={18} color="#a8a8a8" />
                                </Gap>
                            </AccountRow>
                            <ShareButton>
                                <MdPerson size={19} />
                                Share
                            </ShareButton>
                        </AccountColumn>
                    </AppHeader>
                    <Toolbar>
                        <ToolGroup $width={107} $pad={62}>
                            <svg width="19" height="19" viewBox="0 0 19 19">
                                <rect x="1.500" y="1.500" width="16" height="16" fill="none" stroke="#6e6e6e" />
                                <rect x="10" y="5" width="7" height="12" fill="#c8c8c8" />
                                <path d="M1.500 5.500h16M9.500 5.500v12" stroke="#6e6e6e" />
                            </svg>
                            <Caret $left={5} />
                        </ToolGroup>
                        <ToolGroup $width={79} $pad={11}>
                            <ZoomValue>100%</ZoomValue>
                            <Caret $left={8} />
                        </ToolGroup>
                        <ToolGroup $width={73} $pad={8}>
                            <ToolSlot $width={30}>
                                <MdZoomIn />
                            </ToolSlot>
                            <ToolSlot $width={30}>
                                <MdZoomOut />
                            </ToolSlot>
                        </ToolGroup>
                        <ToolGroup $width={73} $pad={7}>
                            <ToolSlot $width={30}>
                                <MdUndo />
                            </ToolSlot>
                            <ToolSlot $width={30}>
                                <MdRedo color="#c6c6c6" />
                            </ToolSlot>
                        </ToolGroup>
                        <ToolGroup $width={43} $pad={13}>
                            <ToolSlot $width={20}>
                                <MdDelete size={24} />
                            </ToolSlot>
                        </ToolGroup>
                        <ToolGroup $width={73} $pad={7}>
                            <ToolSlot $width={30}>
                                <ToFrontIcon />
                            </ToolSlot>
                            <ToolSlot $width={30}>
                                <ToBackIcon />
                            </ToolSlot>
                        </ToolGroup>
                        <ToolGroup $width={103} $pad={7}>
                            <ToolSlot $width={30}>
                                <BucketIcon />
                            </ToolSlot>
                            <ToolSlot $width={30}>
                                <svg width="22" height="22" viewBox="0 0 22 22">
                                    <path d="M13 3l3 3-8 8H5v-3z" fill="#6e6e6e" />
                                    <rect x="1" y="17" width="20" height="3" fill="#6e6e6e" />
                                </svg>
                            </ToolSlot>
                            <ToolSlot $width={31}>
                                <svg width="17" height="17" viewBox="0 0 17 17">
                                    <rect x="4" y="4" width="13" height="12" fill="#b4b4b4" />
                                    <rect x="1.500" y="1.500" width="12" height="11" fill="#f4f4f4" stroke="#6e6e6e" strokeWidth="2" />
                                </svg>
                            </ToolSlot>
                        </ToolGroup>
                        <ToolGroup $width={100} $pad={14}>
                            <svg width="18" height="10" viewBox="0 0 18 10">
                                <path d="M0 5h15" stroke="#6e6e6e" />
                                <path d="M18 5l-5-3 1 3-1 3z" fill="#6e6e6e" />
                            </svg>
                            <Caret $left={3} />
                            <Gap $left={14}>
                                <svg width="20" height="18" viewBox="0 0 20 18">
                                    <rect x="1" y="13" width="3" height="3" fill="none" stroke="#6e6e6e" />
                                    <rect x="15" y="2" width="3" height="3" fill="none" stroke="#6e6e6e" />
                                    <path d="M2.500 13V9.500h14V5" fill="none" stroke="#6e6e6e" />
                                </svg>
                            </Gap>
                            <Caret $left={3} />
                        </ToolGroup>
                        <ToolGroup $width={60} $pad={10} $last>
                            <MdAdd size={24} />
                            <Caret $left={2} />
                        </ToolGroup>
                        <ViewerInfo>
                            No other viewers
                            <Gap $left={6}>
                                <svg width="14" height="14" viewBox="0 0 14 14">
                                    <path d="M1 4V1h3M10 1h3v3M13 10v3h-3M4 13H1v-3" fill="none" stroke="#555" strokeWidth="1.500" />
                                    <rect x="5" y="5" width="4" height="4" fill="#555" />
                                </svg>
                            </Gap>
                            <Gap $left={4}>
                                <svg width="12" height="12" viewBox="0 0 12 12">
                                    <rect x="1.500" y="1.500" width="9" height="9" fill="none" stroke="#555" />
                                    <rect x="7" y="2" width="3" height="8" fill="#555" />
                                </svg>
                            </Gap>
                            <Gap $left={3}>
                                <svg width="12" height="12" viewBox="0 0 12 12">
                                    <path d="M1 6l5-5 5 5M1 11l5-5 5 5" fill="none" stroke="#555" strokeWidth="1.300" />
                                </svg>
                            </Gap>
                        </ViewerInfo>
                    </Toolbar>
                    <Main>
                        <Sidebar>
                            <SidebarBody>
                                <DragArea>Drag elements here</DragArea>
                                <GeneralRow>
                                    <Caret $color="#8f8f8f" />
                                    General
                                </GeneralRow>
                                <ShapeGrid>
                                    {shapeRows.map((shape, index) => (
                                        <ShapeSvg key={index} viewBox="0 0 44 44">
                                            {shape}
                                        </ShapeSvg>
                                    ))}
                                </ShapeGrid>
                                {sectionNames.map(name => (
                                    <SectionRow key={name}>
                                        <Caret $dir="right" />
                                        {name}
                                    </SectionRow>
                                ))}
                            </SidebarBody>
                            <ScrollTrack>
                                <ScrollThumb $top={78} $height={407} />
                            </ScrollTrack>
                            <MoreShapes>More Shapes...</MoreShapes>
                        </Sidebar>
                        <Splitter>
                            <SplitGrip />
                            <SplitGrip />
                        </Splitter>
                        <CanvasColumn>
                            <Viewport>
                                <CanvasGutter $width={51} />
                                <PageSheet>
                                    <Diagram />
                                </PageSheet>
                                <VScrollTrack>
                                    <ScrollThumb $top={153} $height={147} />
                                </VScrollTrack>
                            </Viewport>
                            <HScrollTrack>
                                <HThumb />
                            </HScrollTrack>
                            <PageTabs>
                                <PageMenu>
                                    <MdMoreVert />
                                </PageMenu>
                                <PageTab>Page-1</PageTab>
                                <PageAdd>
                                    <MdAdd />
                                </PageAdd>
                            </PageTabs>
                        </CanvasColumn>
                        <FormatPanel>
                            <PanelTabs>
                                <PanelTab $width={81} $active>
                                    Style
                                </PanelTab>
                                <PanelTab $width={80}>Text</PanelTab>
                                <PanelTab $width={77}>Arrange</PanelTab>
                            </PanelTabs>
                            <PanelSection $height={95}>
                                <SwatchLayout>
                                    <MdChevronLeft />
                                    <SwatchGrid>
                                        {swatches.map(([fill, line]) => (
                                            <Swatch key={fill} $fill={fill} $line={line} />
                                        ))}
                                    </SwatchGrid>
                                    <NextSwatches />
                                </SwatchLayout>
                            </PanelSection>
                            <PanelSection $height={38}>
                                <FillRow>
                                    <CheckBox />
                                    Fill
                                </FillRow>
                            </PanelSection>
                            <PanelSection $height={87}>
                                <LineHead>
                                    <CheckBox />
                                    Line
                                </LineHead>
                                <FieldRow $top={3}>
                                    <LineSelect>
                                        <SelectLine />
                                        <SelectArrow>
                                            <SelectCaret $color="#707070" />
                                        </SelectArrow>
                                    </LineSelect>
                                    <SpinInput>1 pt</SpinInput>
                                    <Stepper>
                                        <StepUp />
                                        <StepDown />
                                    </Stepper>
                                </FieldRow>
                                <FieldRow $top={7}>
                                    <FieldName>Perimeter</FieldName>
                                    <SpinInput>0 pt</SpinInput>
                                    <Stepper>
                                        <StepUp />
                                        <StepDown />
                                    </Stepper>
                                </FieldRow>
                            </PanelSection>
                            <PanelSection $height={31}>
                                <OpacityRow>
                                    Opacity
                                    <SpinInput>100 %</SpinInput>
                                    <Stepper>
                                        <StepUp />
                                        <StepDown />
                                    </Stepper>
                                </OpacityRow>
                            </PanelSection>
                            <PanelSection $height={57}>
                                <OptionGrid>
                                    <CheckRow>
                                        <CheckBox />
                                        Rounded
                                    </CheckRow>
                                    <CheckRow>
                                        <CheckBox />
                                        Shadow
                                    </CheckRow>
                                    <CheckRow>
                                        <CheckBox />
                                        Glass
                                    </CheckRow>
                                    <CheckRow>
                                        <CheckBox />
                                        Comic
                                    </CheckRow>
                                </OptionGrid>
                            </PanelSection>
                            <PanelSection $height={88}>
                                <ActionGrid>
                                    <ActionButton>Edit Style</ActionButton>
                                    <ActionButton>Edit Image</ActionButton>
                                    <ActionButton>Copy Style</ActionButton>
                                    <ActionButton>Paste Style</ActionButton>
                                    <ActionButton $wide>Set as Default Style</ActionButton>
                                </ActionGrid>
                            </PanelSection>
                        </FormatPanel>
                    </Main>
                    <Footer>
                        <FooterLink $width={267} $left={353} $offset={0}>
                            <MdStar size={18} color="#eec04a" />
                            Please help us to 5 stars
                        </FooterLink>
                        <FooterLink $width={284} $left={0} $highlight $offset={5}>
                            <ConfluenceGlyph />
                            #1 Rated Confluence App
                        </FooterLink>
                        <SocialRow>
                            <SocialTile>
                                <YouTubeText>
                                    You
                                    <br />
                                    Tube
                                </YouTubeText>
                            </SocialTile>
                            <SocialTile>
                                <FaFacebookF />
                            </SocialTile>
                            <SocialTile>
                                <FaTwitter />
                            </SocialTile>
                            <SocialTile>
                                <FaGithub />
                            </SocialTile>
                            <FooterClose />
                        </SocialRow>
                    </Footer>
                </BrowserWindow>
                <Taskbar>
                    <StartOrb viewBox="0 0 40 40">
                        <defs>
                            <radialGradient id="orb" cx="50%" cy="65%" r="60%">
                                <stop offset="0" stopColor="#58b7ea" />
                                <stop offset="1" stopColor="#0b4a7c" />
                            </radialGradient>
                        </defs>
                        <circle cx="20" cy="20" r="18.500" fill="url(#orb)" stroke="#072b47" />
                        <path d="M10 14c3-2 6-2 9-1l-1 7c-3-1-6-1-9 1z" fill="#e5532d" />
                        <path d="M21 13c3 1 6 1 9-1l-1 7c-3 2-6 2-9 1z" fill="#8cc63f" />
                        <path d="M8 23c3-2 6-2 9-1l-1 7c-3-1-6-1-9 1z" fill="#2f9fe0" />
                        <path d="M19 22c3 1 6 1 9-1l-1 7c-3 2-6 2-9 1z" fill="#fcc32c" />
                    </StartOrb>
                    <TaskButton>
                        <ChromeLogo />
                    </TaskButton>
                    <Tray>
                        <Caret $dir="up" $color="#fff" />
                        <Gap $left={12}>
                            <svg width="16" height="18" viewBox="0 0 16 18">
                                <path d="M1 0v18" stroke="#fff" />
                                <path d="M3 2h6v2h5l-3 3 3 3H8V8H3z" fill="#fff" />
                            </svg>
                        </Gap>
                        <Gap $left={9}>
                            <svg width="16" height="18" viewBox="0 0 16 18" fill="none" stroke="#fff">
                                <path d="M3 3h11v10H3zM8 13v3M4 16.500h9" />
                                <rect x="1" y="1" width="3" height="7" fill="#fff" />
                            </svg>
                        </Gap>
                        <Gap $left={8}>
                            <svg width="16" height="18" viewBox="0 0 16 18" fill="none" stroke="#fff">
                                <path d="M1 7h3l4-4v12l-4-4H1z" fill="#fff" />
                                <path d="M10 6c2 2 2 4 0 6M12 4c3 3 3 7 0 10" />
                            </svg>
                        </Gap>
                        <Clock>
                            3:40 PM
                            <br />
                            12/8/2017
                        </Clock>
                        <ShowDesktop />
                    </Tray>
                </Taskbar>
            </Desktop>
        </>
    );
};

export default App;
